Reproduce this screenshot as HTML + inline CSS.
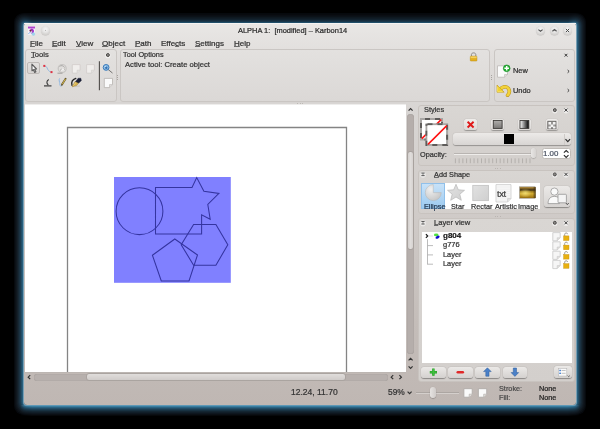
<!DOCTYPE html>
<html><head><meta charset="utf-8">
<style>
*{box-sizing:border-box;margin:0;padding:0}
html,body{width:600px;height:429px;overflow:hidden;background:#000}
body{position:relative;font-family:"Liberation Sans",sans-serif;font-size:8px;color:#2e2e2e}
.a{position:absolute}
svg.a{overflow:visible}
#win{left:24px;top:23px;width:552px;height:382px;border-radius:3px;
 background:linear-gradient(#e9e7e5 0px,#dfdcda 40px,#d9d6d4 80px,#cfcac7 200px,#c4bdb9 300px,#bfb7b3 382px);
}
.t{position:absolute;white-space:pre;line-height:1;-webkit-text-stroke:.22px currentColor;will-change:transform}
u{text-decoration:underline;text-decoration-thickness:1px;text-decoration-color:#6a6a6a;text-underline-offset:.4px}
</style></head><body>
<div class="a" style="left:24px;top:23px;width:552px;height:382px;border-radius:3px;box-shadow:0 0 0 1px rgb(118, 158, 180),0 0 0 2px rgb(40, 96, 126),0 0 0 3px rgb(34, 78, 104),0 0 0 4px rgb(30, 62, 82),0 0 0 5px rgb(27, 50, 66),0 0 0 6px rgb(23, 40, 52),0 0 0 7px rgb(20, 31, 40),0 0 0 8px rgb(16, 23, 30),0 0 0 9px rgb(12, 17, 22),0 0 0 10px rgb(6, 9, 13)"></div>
<div class="a" style="left:20px;top:405px;width:560px;height:11px;background:linear-gradient(rgb(95, 152, 182) 0px,rgb(95, 152, 182) 1px,rgb(55, 125, 160) 1px,rgb(55, 125, 160) 2px,rgb(42, 98, 130) 2px,rgb(42, 98, 130) 3px,rgb(34, 78, 104) 3px,rgb(34, 78, 104) 4px,rgb(28, 62, 84) 4px,rgb(28, 62, 84) 5px,rgb(24, 50, 66) 5px,rgb(24, 50, 66) 6px,rgb(20, 38, 50) 6px,rgb(20, 38, 50) 7px,rgb(17, 30, 40) 7px,rgb(17, 30, 40) 8px,rgb(14, 22, 30) 8px,rgb(14, 22, 30) 9px,rgb(11, 15, 20) 9px,rgb(11, 15, 20) 10px,rgb(6, 8, 10) 10px,rgb(6, 8, 10) 11px);-webkit-mask-image:linear-gradient(90deg,transparent 0,#000 12px,#000 548px,transparent 560px)"></div>
<div class="a" style="left:20px;top:14px;width:560px;height:9px;background:linear-gradient(rgb(8, 10, 14) 0px,rgb(8, 10, 14) 1px,rgb(10, 14, 20) 1px,rgb(10, 14, 20) 2px,rgb(12, 18, 24) 2px,rgb(12, 18, 24) 3px,rgb(14, 24, 32) 3px,rgb(14, 24, 32) 4px,rgb(16, 28, 38) 4px,rgb(16, 28, 38) 5px,rgb(18, 34, 46) 5px,rgb(18, 34, 46) 6px,rgb(22, 45, 62) 6px,rgb(22, 45, 62) 7px,rgb(25, 55, 75) 7px,rgb(25, 55, 75) 8px,rgb(32, 78, 105) 8px,rgb(32, 78, 105) 9px);-webkit-mask-image:linear-gradient(90deg,transparent 0,#000 12px,#000 548px,transparent 560px)"></div>
<div id="win" class="a"></div>
<div class="a" style="left:24px;top:23px;width:552px;height:1px;background:#f4f3f2"></div>
<svg class="a" style="left:27px;top:25.5px" width="9" height="10" viewBox="0 0 9 10">
<rect x="1" y="1" width="7" height="7.8" fill="#f6f2fa"/>
<rect x="1" y=".6" width="7" height="1.9" fill="#b040cc"/>
<path d="M4.6 2.6 C6.6 3 7.4 4.6 6.8 6.2 C6.2 7.6 4.6 7.8 3.8 7.4 C5 6.8 5.6 5.6 4.8 4.6 C4.4 4.1 3.8 4 3.2 4.2 Z" fill="#a030c8"/>
<ellipse cx="3.6" cy="4.6" rx="1.1" ry="1.2" fill="#702048"/>
<circle cx="6.4" cy="8" r="1.8" fill="#90d0e8" opacity=".85"/>
<path d="M1.4 7.6 C2.2 6.8 2.8 6.6 3.6 6.6" stroke="#6aa8e0" stroke-width=".9" fill="none"/>
</svg>
<div class="a" style="left:40.8px;top:25.5px;width:9px;height:9px;border-radius:50%;background:radial-gradient(circle at 50% 38%,#f6f6f6 0,#e6e5e4 40%,#d2d0ce 72%,#a8a6a4 100%);box-shadow:0 .6px .8px rgba(0,0,0,.18)"></div>
<svg class="a" style="left:40.8px;top:25.5px" width="9" height="9" viewBox="0 0 9 9"><circle cx="4.5" cy="4.3" r=".5" fill="#9a9896"/></svg>
<div class="a" style="left:535.8px;top:25.5px;width:9px;height:9px;border-radius:50%;background:radial-gradient(circle at 50% 38%,#f6f6f6 0,#e6e5e4 40%,#d2d0ce 72%,#a8a6a4 100%);box-shadow:0 .6px .8px rgba(0,0,0,.18)"></div>
<svg class="a" style="left:535.8px;top:25.5px" width="9" height="9" viewBox="0 0 9 9"><path d="M2.4 3.6 L4.5 5.3 L6.6 3.6" fill="none" stroke="#555" stroke-width="1.15"/></svg>
<div class="a" style="left:549.5px;top:25.5px;width:9px;height:9px;border-radius:50%;background:radial-gradient(circle at 50% 38%,#f6f6f6 0,#e6e5e4 40%,#d2d0ce 72%,#a8a6a4 100%);box-shadow:0 .6px .8px rgba(0,0,0,.18)"></div>
<svg class="a" style="left:549.5px;top:25.5px" width="9" height="9" viewBox="0 0 9 9"><path d="M2.4 5.2 L4.5 3.5 L6.6 5.2" fill="none" stroke="#555" stroke-width="1.15"/></svg>
<div class="a" style="left:563.2px;top:25.5px;width:9px;height:9px;border-radius:50%;background:radial-gradient(circle at 50% 38%,#f6f6f6 0,#e6e5e4 40%,#d2d0ce 72%,#a8a6a4 100%);box-shadow:0 .6px .8px rgba(0,0,0,.18)"></div>
<svg class="a" style="left:563.2px;top:25.5px" width="9" height="9" viewBox="0 0 9 9"><path d="M2.9 2.9 L6.1 6.1 M6.1 2.9 L2.9 6.1" fill="none" stroke="#4a4a4a" stroke-width="1"/></svg>
<div class="t" style="left:238px;top:26.89px;font-size:7.45px;color:#2a2a2a;font-weight:400;">ALPHA 1:&nbsp; [modified] – Karbon14</div>
<div class="t" style="left:30px;top:39.63px;font-size:8px;color:#2f2f2f;font-weight:400;"><u>F</u>ile</div>
<div class="t" style="left:51.5px;top:39.63px;font-size:8px;color:#2f2f2f;font-weight:400;"><u>E</u>dit</div>
<div class="t" style="left:76px;top:39.63px;font-size:8px;color:#2f2f2f;font-weight:400;"><u>V</u>iew</div>
<div class="t" style="left:102px;top:39.63px;font-size:8px;color:#2f2f2f;font-weight:400;"><u>O</u>bject</div>
<div class="t" style="left:134.5px;top:39.63px;font-size:8px;color:#2f2f2f;font-weight:400;"><u>P</u>ath</div>
<div class="t" style="left:160.5px;top:39.63px;font-size:8px;color:#2f2f2f;font-weight:400;">Effe<u>c</u>ts</div>
<div class="t" style="left:194.5px;top:39.63px;font-size:8px;color:#2f2f2f;font-weight:400;"><u>S</u>ettings</div>
<div class="t" style="left:233.5px;top:39.63px;font-size:8px;color:#2f2f2f;font-weight:400;"><u>H</u>elp</div>
<div class="a" style="left:25px;top:49px;width:91.5px;height:52.5px;border:1px solid #cac6c3;border-radius:3px;background:linear-gradient(#e3e1df,#dbd8d6)"></div>
<div class="a" style="left:119.5px;top:49px;width:370.5px;height:52.5px;border:1px solid #cac6c3;border-radius:3px;background:linear-gradient(#e3e1df,#dbd8d6)"></div>
<div class="a" style="left:493.5px;top:49px;width:81.5px;height:52.5px;border:1px solid #cac6c3;border-radius:3px;background:linear-gradient(#e3e1df,#dbd8d6)"></div>
<div class="t" style="left:30.7px;top:51.07px;font-size:7.6px;color:#333;font-weight:400;"><u>T</u>ools</div>
<svg class="a" style="left:0;top:0" width="600" height="429"><circle cx="107.9" cy="55.7" r="2.6" fill="rgba(255,255,255,.55)"/><circle cx="107.9" cy="55" r="1.5" fill="#8a8886" stroke="#4e4c4a" stroke-width="1"/></svg>
<div class="a" style="left:27.3px;top:62px;width:12.7px;height:12px;border:1px solid #bdb9b6;border-radius:2px;background:linear-gradient(#e2e0de,#d8d5d3)"></div>
<svg class="a" style="left:0;top:0" width="600" height="429">
<path d="M31.9 64.2 L32 70.8 L33.4 69.7 L34.7 72.4 L35.9 71.8 L34.6 69.2 L36.5 69 Z" fill="#fafafa" stroke="#5a5a5a" stroke-width="1.1" stroke-linejoin="round"/>
<path d="M45 66.2 C47.5 66.5 47 69 48.5 70.5 C49.5 71.6 50.5 72 51.5 72" fill="none" stroke="#8cb4e0" stroke-width=".9"/>
<rect x="43.3" y="64.9" width="2" height="2" fill="#e03040"/>
<rect x="50.5" y="71.1" width="2" height="2" fill="#e03040"/>
<g opacity=".55">
<circle cx="62.2" cy="68.5" r="4" fill="none" stroke="#b0aeac" stroke-width="1.2"/>
<path d="M59.5 66.5 C61 65 63.5 65.5 64.5 67.5 M60 70.5 C61.5 69 63 68 65 69.5" stroke="#7a7876" stroke-width="1" fill="none"/>
<path d="M57.5 73.2 L62.5 73.2" stroke="#6a6866" stroke-width="1"/>
<path d="M60.5 71 L63 67.5 L64.5 70 Z" fill="#fff"/>
</g>
<path d="M99.4 61.2 L99.4 90.2" stroke="#4e4c4a" stroke-width="1.1"/>
<path d="M108.3 69.6 L112.2 72.8" stroke="#747270" stroke-width="1" stroke-linecap="round"/>
<circle cx="106.1" cy="67.4" r="2.9" fill="#8cc0e8" stroke="#3a78b8" stroke-width="1"/>
<circle cx="106.3" cy="67.8" r="1.2" fill="#3a70b0"/>
<circle cx="105.2" cy="66.3" r=".6" fill="#e0f0fc"/>
<path d="M48.8 79.4 C46.5 80.5 46.2 83.5 48.3 85" fill="none" stroke="#3a3a3a" stroke-width="1.1"/>
<path d="M44 85.9 L51.5 85.9" stroke="#2a2a2a" stroke-width="1.1"/>
<path d="M59.6 78.4 C58.4 80.2 59.8 81.8 59.8 83.6 C59.8 85.4 60.2 86.6 61.6 86" fill="none" stroke="#88b4e2" stroke-width=".9"/>
<path d="M65.6 78.8 L62 84.6" stroke="#6a5a30" stroke-width="1.9" stroke-linecap="round"/>
<path d="M65.4 79 L62.2 84.3" stroke="#e8cc50" stroke-width=".8"/>
<path d="M62 84.6 L61.6 85.6" stroke="#333" stroke-width=".8"/>
<path d="M75.8 78.4 C72.8 79.4 71.2 82.2 72 85.3" fill="none" stroke="#262626" stroke-width="1.3" stroke-linecap="round"/>
<path d="M72.2 86.8 L75.2 81.4 L78.8 82.6 L76.6 85.6 Z" fill="#d8b450" stroke="#9a7a28" stroke-width=".5" stroke-linejoin="round"/>
<path d="M73.2 85.8 L76 82.4" stroke="#f0d890" stroke-width=".7"/>
<path d="M75.6 81.6 L78.2 78.2 L80.8 78.2 L81.4 80.6 L78.8 83 Z" fill="#1c2038" stroke="#10142a" stroke-width=".4" stroke-linejoin="round"/>
<path d="M74 86.5 L80 86" stroke="#b8b4b0" stroke-width=".8" opacity=".7"/>
</svg>
<svg class="a" style="left:0;top:0;opacity:1" width="600" height="429"><path d="M72.3 64.6 L80.1 64.6 L80.1 70.19999999999999 L77.1 73.19999999999999 L72.3 73.19999999999999 Z" fill="#f0eeec" stroke="#d0ccc9" stroke-width=".8"/><path d="M80.1 70.19999999999999 L77.1 70.19999999999999 L77.1 73.19999999999999" fill="#e0dedc" stroke="#d0ccc9" stroke-width=".6"/></svg>
<svg class="a" style="left:0;top:0;opacity:1" width="600" height="429"><path d="M86.6 64.6 L94.39999999999999 64.6 L94.39999999999999 70.19999999999999 L91.39999999999999 73.19999999999999 L86.6 73.19999999999999 Z" fill="#f0eeec" stroke="#d0ccc9" stroke-width=".8"/><path d="M94.39999999999999 70.19999999999999 L91.39999999999999 70.19999999999999 L91.39999999999999 73.19999999999999" fill="#e0dedc" stroke="#d0ccc9" stroke-width=".6"/></svg>
<svg class="a" style="left:0;top:0;opacity:1" width="600" height="429"><path d="M104.3 78.4 L112.5 78.4 L112.5 84.60000000000001 L109.5 87.60000000000001 L104.3 87.60000000000001 Z" fill="#fafafa" stroke="#b8b4b0" stroke-width=".8"/><path d="M112.5 84.60000000000001 L109.5 84.60000000000001 L109.5 87.60000000000001" fill="#e0dedc" stroke="#b8b4b0" stroke-width=".6"/></svg>
<div class="a" style="left:117.2px;top:74.5px;width:1px;height:1px;background:#a8a4a0"></div>
<div class="a" style="left:117.2px;top:76.5px;width:1px;height:1px;background:#a8a4a0"></div>
<div class="a" style="left:117.2px;top:78.5px;width:1px;height:1px;background:#a8a4a0"></div>
<div class="a" style="left:491px;top:74.5px;width:1px;height:1px;background:#a8a4a0"></div>
<div class="a" style="left:491px;top:76.5px;width:1px;height:1px;background:#a8a4a0"></div>
<div class="a" style="left:491px;top:78.5px;width:1px;height:1px;background:#a8a4a0"></div>
<div class="t" style="left:123px;top:51.22px;font-size:7.3px;color:#333;font-weight:400;">Tool Options</div>
<div class="t" style="left:125px;top:60.62px;font-size:7.65px;color:#333;font-weight:400;">Active tool: Create object</div>
<svg class="a" style="left:0;top:0" width="600" height="429">
<path d="M471.4 56.3 L471.4 54.6 C471.4 52.3 475.8 52.3 475.8 54.6 L475.8 56.3" fill="none" stroke="#8a8784" stroke-width="1"/>
<rect x="470.3" y="56.2" width="6.6" height="4.8" rx=".6" fill="#e4b020" stroke="#b88a10" stroke-width=".5"/>
<rect x="470.6" y="56.5" width="6" height="1.6" fill="#f4d060"/>
</svg>
<svg class="a" style="left:0;top:0" width="600" height="429">
<path d="M564.6 53.8 L567.4 56.6 M567.4 53.8 L564.6 56.6" stroke="#3a3a3a" stroke-width="1"/>
<path d="M497.5 65.8 L505 65.8 L507.5 68 L507.5 74.5 L504.5 77.2 L497.5 77.2 Z" fill="#fbfbfb" stroke="#b4b0ad" stroke-width=".7"/>
<path d="M507.5 74.5 L504.5 74.5 L504.5 77.2" fill="#dedcda" stroke="#b4b0ad" stroke-width=".5"/>
<circle cx="506.7" cy="68.3" r="3.4" fill="#22b030" stroke="#108020" stroke-width=".5"/>
<path d="M506.7 66 L506.7 70.6 M504.4 68.3 L509 68.3" stroke="#fff" stroke-width="1.5"/>
<path d="M567.6 70 L569.1 71.4 L567.6 72.8" fill="none" stroke="#3a3a3a" stroke-width="1"/>
<path d="M567.6 89.1 L569.1 90.5 L567.6 91.9" fill="none" stroke="#3a3a3a" stroke-width="1"/>
<path d="M500.2 89.6 C501.8 86.6 506.6 85.6 508.6 88.8 C509.9 91 509.2 93.6 507.6 95.2" stroke="#b89018" stroke-width="3.6" fill="none" stroke-linecap="round"/>
<path d="M500.2 89.6 C501.8 86.6 506.6 85.6 508.6 88.8 C509.9 91 509.2 93.6 507.6 95.2" stroke="#f2d23a" stroke-width="2.6" fill="none" stroke-linecap="round"/>
<path d="M497 85 L497 92.2 L504.2 92.2 Z" fill="#f0d030" stroke="#c09a18" stroke-width=".6" stroke-linejoin="round"/>
<path d="M497.6 86.6 L497.6 91.6 L502.6 91.6" fill="none" stroke="#f8e46a" stroke-width=".8"/>
</svg>
<div class="t" style="left:512.7px;top:67.04px;font-size:7.4px;color:#2e2e2e;font-weight:400;">New</div>
<div class="t" style="left:512.7px;top:86.54px;font-size:7.4px;color:#2e2e2e;font-weight:400;">Undo</div>
<div class="a" style="left:25px;top:101.5px;width:381px;height:3.5px;background:linear-gradient(#d6d3d1,#dcd9d7)"></div>
<div class="a" style="left:25px;top:104px;width:381px;height:1px;background:#eeedec"></div>
<div class="a" style="left:25px;top:105px;width:381px;height:267px;background:#fff"></div>
<svg class="a" style="left:0;top:0" width="600" height="429">
<path d="M67.5 372 L67.5 127.5 L346.5 127.5 L346.5 372" fill="none" stroke="#848484" stroke-width="1.3"/>
<rect x="114" y="177" width="116.8" height="105.8" fill="#8080ff"/>
<g fill="none" stroke="#3434a0" stroke-width="1.05" stroke-linejoin="miter">
<circle cx="139.5" cy="211.2" r="23.4"/>
<path d="M155.5 187.4 L192 187.4 L196.7 177.6 L203.9 191.3 L218.9 193.4 L207.8 204.5 L210.2 219.2 L201.6 214.8 L201.6 234 L155.5 234 Z"/>
<path d="M193.6 224.5 L215.9 224.5 L227.8 244.8 L215.9 265.2 L193.6 265.2 L181.2 244.8 Z"/>
<path d="M174.8 239 L197.5 255 L189 281 L161.3 281 L152.4 255.2 Z"/>
</g>
</svg>
<div class="a" style="left:406.6px;top:114.2px;width:7.8px;height:240.2px;border-radius:3.5px;background:#b5aeab;box-shadow:inset 0 0 1px rgba(0,0,0,.3)"></div>
<div class="a" style="left:407.2px;top:151.2px;width:6.6px;height:99.3px;border-radius:3px;background:linear-gradient(90deg,#d4d0ce,#e0dddb 50%,#d6d2d0);border:1px solid #a8a29e"></div>
<div class="a" style="left:25px;top:372px;width:381px;height:1px;background:#bcb6b2"></div>
<div class="a" style="left:34px;top:373.5px;width:353.5px;height:7.5px;border-radius:3px;background:#b7b0ad;box-shadow:inset 0 0 1px rgba(0,0,0,.25)"></div>
<div class="a" style="left:86.4px;top:373.3px;width:260.1px;height:7.7px;border-radius:3px;background:linear-gradient(#e0dddb,#d0ccca);border:1px solid #aaa4a0"></div>
<svg class="a" style="left:0;top:0" width="600" height="429">
<g fill="none" stroke="#333" stroke-width="1.2">
<path d="M408.6 110.6 L410.6 108.6 L412.6 110.6"/>
<path d="M408.6 360.3 L410.6 358.3 L412.6 360.3"/>
<path d="M408.6 366.3 L410.6 368.3 L412.6 366.3"/>
<path d="M30.2 375.2 L28.2 377.2 L30.2 379.2"/>
<path d="M393.2 375.2 L391.2 377.2 L393.2 379.2"/>
<path d="M399.4 375.2 L401.4 377.2 L399.4 379.2"/>
</g>
</svg>
<div class="a" style="left:418px;top:104.5px;width:157px;height:61.5px;border:1px solid #c8c3bf;border-radius:3px;background:linear-gradient(#d9d6d3,#d3cfcc)"></div>
<div class="a" style="left:418px;top:170px;width:157px;height:44px;border:1px solid #c8c3bf;border-radius:3px;background:linear-gradient(#d9d6d3,#d3cfcc)"></div>
<div class="a" style="left:418px;top:218px;width:157px;height:163.5px;border:1px solid #c8c3bf;border-radius:3px;background:linear-gradient(#d9d6d3,#d3cfcc)"></div>
<svg class="a" style="left:0;top:0" width="600" height="429"><circle cx="554.8" cy="110.8" r="2.6" fill="rgba(255,255,255,.55)"/><circle cx="566" cy="110.8" r="2.6" fill="rgba(255,255,255,.55)"/><circle cx="554.8" cy="110.1" r="1.5" fill="#8a8886" stroke="#4e4c4a" stroke-width="1"/><path d="M564.5 108.6 L567.5 111.6 M567.5 108.6 L564.5 111.6" stroke="#3a3a3a" stroke-width="1"/></svg>
<svg class="a" style="left:0;top:0" width="600" height="429"><circle cx="554.8" cy="175.1" r="2.6" fill="rgba(255,255,255,.55)"/><circle cx="566" cy="175.1" r="2.6" fill="rgba(255,255,255,.55)"/><circle cx="554.8" cy="174.4" r="1.5" fill="#8a8886" stroke="#4e4c4a" stroke-width="1"/><path d="M564.5 172.9 L567.5 175.9 M567.5 172.9 L564.5 175.9" stroke="#3a3a3a" stroke-width="1"/></svg>
<svg class="a" style="left:0;top:0" width="600" height="429"><circle cx="554.8" cy="223.5" r="2.6" fill="rgba(255,255,255,.55)"/><circle cx="566" cy="223.5" r="2.6" fill="rgba(255,255,255,.55)"/><circle cx="554.8" cy="222.8" r="1.5" fill="#8a8886" stroke="#4e4c4a" stroke-width="1"/><path d="M564.5 221.3 L567.5 224.3 M567.5 221.3 L564.5 224.3" stroke="#3a3a3a" stroke-width="1"/></svg>
<svg class="a" style="left:0;top:0" width="600" height="429"><circle cx="423" cy="175.0" r="2.8" fill="rgba(255,255,255,.5)"/><path d="M421.4 173.1 L424.6 173.1 M421.4 175.6 L424.6 175.6" stroke="#555" stroke-width="1"/><path d="M422.2 173.8 L423.8 173.8 M422.2 174.9 L423.8 174.9" stroke="#777" stroke-width=".6"/></svg>
<svg class="a" style="left:0;top:0" width="600" height="429"><circle cx="423" cy="223.4" r="2.8" fill="rgba(255,255,255,.5)"/><path d="M421.4 221.5 L424.6 221.5 M421.4 224.0 L424.6 224.0" stroke="#555" stroke-width="1"/><path d="M422.2 222.20000000000002 L423.8 222.20000000000002 M422.2 223.3 L423.8 223.3" stroke="#777" stroke-width=".6"/></svg>
<div class="t" style="left:423.5px;top:106.34px;font-size:7.4px;color:#333;font-weight:400;">St<u>y</u>les</div>
<div class="t" style="left:433.8px;top:170.92px;font-size:7.3px;color:#333;font-weight:400;"><u>A</u>dd Shape</div>
<div class="t" style="left:433.8px;top:219.07px;font-size:7.6px;color:#333;font-weight:400;"><u>L</u>ayer view</div>
<svg class="a" style="left:0;top:0" width="600" height="429">
<rect x="421" y="119" width="21" height="20.5" fill="#fff" stroke="#a8a6a4" stroke-width="2"/>
<rect x="421" y="119" width="21" height="20.5" fill="none" stroke="#5e5c5a" stroke-width="2" stroke-dasharray="5 5" stroke-dashoffset="-4"/>
<path d="M421.8 138.6 L441.2 119.6" stroke="#ff1010" stroke-width="1.5"/>
<rect x="426.5" y="124.3" width="20.6" height="20.6" fill="#fff" stroke="#a8a6a4" stroke-width="2"/>
<rect x="426.5" y="124.3" width="20.6" height="20.6" fill="none" stroke="#5e5c5a" stroke-width="2" stroke-dasharray="5 5" stroke-dashoffset="-1"/>
<rect x="427.6" y="125.4" width="18.4" height="18.4" fill="#fff"/>
<path d="M428 144.4 L446.8 125.6" stroke="#ff1010" stroke-width="1.5"/>
</svg>
<div class="a" style="left:464.2px;top:119.2px;width:12.8px;height:11px;border-radius:2.5px;background:linear-gradient(#efedeb,#dcd9d7);box-shadow:0 .5px 1px rgba(0,0,0,.3)"></div>
<div class="a" style="left:490.6px;top:119.2px;width:13.2px;height:11px;border-radius:2.5px;background:linear-gradient(#efedeb,#dcd9d7);box-shadow:0 .5px 1px rgba(0,0,0,.3)"></div>
<div class="a" style="left:517.7px;top:119.2px;width:13.2px;height:11px;border-radius:2.5px;background:linear-gradient(#efedeb,#dcd9d7);box-shadow:0 .5px 1px rgba(0,0,0,.3)"></div>
<div class="a" style="left:545.6px;top:119.2px;width:12.6px;height:11px;border-radius:2.5px;background:linear-gradient(#efedeb,#dcd9d7);box-shadow:0 .5px 1px rgba(0,0,0,.3)"></div>
<svg class="a" style="left:0;top:0" width="600" height="429">
<path d="M467.6 121.7 L473.6 127.5 M473.6 121.7 L467.6 127.5" stroke="#e01818" stroke-width="1.9"/>
<defs><linearGradient id="gg" x1="0" y1="0" x2="1" y2="0"><stop offset="0" stop-color="#fff"/><stop offset="1" stop-color="#000"/></linearGradient>
<linearGradient id="gs" x1="0" y1="0" x2="0" y2="1"><stop offset="0" stop-color="#b0aeac"/><stop offset="1" stop-color="#7a7876"/></linearGradient></defs>
<rect x="493.3" y="120.4" width="8.8" height="8" fill="url(#gs)" stroke="#3a3836" stroke-width=".9"/>
<rect x="520" y="120.4" width="8.8" height="8" fill="url(#gg)" stroke="#3a3836" stroke-width=".9"/>
<rect x="547.8" y="121.2" width="8.2" height="7.6" fill="#9a9896" stroke="#5a5856" stroke-width=".7"/>
<path d="M548.5 122 h2.5 v2.5 h-2.5z M553 122 h2.5 v2.5 h-2.5z M550.7 124.5 h2.5 v2.5 h-2.5z M548.5 126.5 h2.5 v2 h-2.5z M553 126.5 h2.5 v2 h-2.5z" fill="#f4f4f4"/>
</svg>
<div class="a" style="left:452.5px;top:133.2px;width:118.5px;height:12px;border-radius:3px;background:linear-gradient(#eceae8,#d8d5d3);box-shadow:0 .5px 1px rgba(0,0,0,.3)"></div>
<div class="a" style="left:563.5px;top:134px;width:1px;height:10.5px;background:#cfcbc8"></div>
<div class="a" style="left:503.8px;top:134.4px;width:10.2px;height:9.8px;background:#000"></div>
<svg class="a" style="left:0;top:0" width="600" height="429"><path d="M565.5 139.1 L567.8 141.6 L570.1 139.1" fill="none" stroke="#2a2a2a" stroke-width="1.15"/></svg>
<div class="t" style="left:419.9px;top:151.02px;font-size:7.3px;color:#333;font-weight:400;">Opacity:</div>
<div class="a" style="left:454px;top:152.7px;width:77px;height:1px;background:#b8b4b1;box-shadow:0 1px 0 #eeecea"></div>
<svg class="a" style="left:0;top:0" width="600" height="429"><g stroke="#aca8a4" stroke-width=".8"><path d="M455.40 158.4 L455.40 163.2"/><path d="M459.13 158.4 L459.13 163.2"/><path d="M462.86 158.4 L462.86 163.2"/><path d="M466.59 158.4 L466.59 163.2"/><path d="M470.32 158.4 L470.32 163.2"/><path d="M474.05 158.4 L474.05 163.2"/><path d="M477.78 158.4 L477.78 163.2"/><path d="M481.51 158.4 L481.51 163.2"/><path d="M485.24 158.4 L485.24 163.2"/><path d="M488.97 158.4 L488.97 163.2"/><path d="M492.70 158.4 L492.70 163.2"/><path d="M496.43 158.4 L496.43 163.2"/><path d="M500.16 158.4 L500.16 163.2"/><path d="M503.89 158.4 L503.89 163.2"/><path d="M507.62 158.4 L507.62 163.2"/><path d="M511.35 158.4 L511.35 163.2"/><path d="M515.08 158.4 L515.08 163.2"/><path d="M518.81 158.4 L518.81 163.2"/><path d="M522.54 158.4 L522.54 163.2"/><path d="M526.27 158.4 L526.27 163.2"/><path d="M530.00 158.4 L530.00 163.2"/></g></svg>
<div class="a" style="left:530.8px;top:148.4px;width:5px;height:10px;border-radius:2.5px;background:linear-gradient(90deg,#e8e6e4,#d6d3d1);box-shadow:0 .5px 1px rgba(0,0,0,.35)"></div>
<div class="a" style="left:541.6px;top:148.3px;width:29.4px;height:10.8px;border-radius:2.5px;background:#fff;border:1px solid #bfbbb7"></div>
<div class="t" style="left:542.7px;top:149.81px;font-size:7.9px;color:#4a5262;font-weight:400;">1.00</div>
<svg class="a" style="left:0;top:0" width="600" height="429"><g fill="none" stroke="#2a2a2a" stroke-width="1.15"><path d="M563.9 152.7 L566.2 150.5 L568.5 152.7"/><path d="M563.9 155.2 L566.2 157.4 L568.5 155.2"/></g></svg>
<div class="a" style="left:421.4px;top:182.8px;width:118.4px;height:26.5px;background:#fff"></div>
<div class="a" style="left:421.4px;top:182.8px;width:23.8px;height:26.5px;background:linear-gradient(#c8e2f8,#9ccaf0);border:1px solid #90c0ea"></div>
<svg class="a" style="left:0;top:0" width="600" height="429">
<defs><radialGradient id="pie" cx=".35" cy=".3" r=".8"><stop offset="0" stop-color="#f0f0f0"/><stop offset="1" stop-color="#c4c4c4"/></radialGradient>
<linearGradient id="shp" x1="0" y1="0" x2="1" y2="1"><stop offset="0" stop-color="#e2e2e2"/><stop offset="1" stop-color="#cfcfcf"/></linearGradient>
<linearGradient id="img" x1="0" y1="0" x2="0" y2="1"><stop offset="0" stop-color="#c8a050"/><stop offset=".12" stop-color="#8a6a28"/><stop offset=".28" stop-color="#3a2c12"/><stop offset=".4" stop-color="#9a7a20"/><stop offset=".6" stop-color="#d4ac30"/><stop offset="1" stop-color="#9a7010"/></linearGradient><radialGradient id="imgh" cx=".35" cy=".55" r=".4"><stop offset="0" stop-color="#f8e880" stop-opacity=".8"/><stop offset="1" stop-color="#f8e880" stop-opacity="0"/></radialGradient></defs>
<path d="M433.3 192.6 L433.3 184.6 A8 8 0 1 0 441.3 192.6 Z" fill="url(#pie)" stroke="#b4b4b4" stroke-width=".5"/>
<path d="M456 184.3 L458.3 189.8 L464.5 190.3 L459.8 194.2 L461.3 200.3 L456 197 L450.7 200.3 L452.2 194.2 L447.5 190.3 L453.7 189.8 Z" fill="url(#shp)" stroke="#b8b8b8" stroke-width=".7"/>
<rect x="472.8" y="185.3" width="15.8" height="15.4" fill="url(#shp)" stroke="#bcbcbc" stroke-width=".7"/>
<path d="M496 184.6 L511 184.6 L511 198.6 L507.6 202 L496 202 Z" fill="#f8f8f8" stroke="#c4c4c4" stroke-width=".7"/>
<path d="M496.6 187 h14 M496.6 189.2 h14 M496.6 191.4 h14 M496.6 193.6 h14 M496.6 195.8 h14 M496.6 198 h14 M496.6 200.2 h11" stroke="#e6e6e6" stroke-width=".5"/>
<path d="M511 198.6 L507.6 198.6 L507.6 202" fill="#e4e4e4" stroke="#c4c4c4" stroke-width=".6"/>
<rect x="519.8" y="186.9" width="15.8" height="11.2" fill="url(#img)" stroke="#2a2010" stroke-width=".3"/><rect x="519.8" y="186.9" width="15.8" height="11.2" fill="url(#imgh)"/><rect x="533.6" y="187" width="2" height="11" fill="#3a2a10" opacity=".5"/>
</svg>
<div class="t" style="left:497.4px;top:188.64px;font-size:9.4px;color:#3e3e3e;font-weight:400;letter-spacing:-.4px">txt</div>
<div class="t" style="left:423.6px;top:202.92px;font-size:7.3px;color:#243850;font-weight:400;">Ellipse</div>
<div class="t" style="left:450.6px;top:202.92px;font-size:7.3px;color:#333;font-weight:400;">Star</div>
<div class="t" style="left:470.8px;top:202.92px;font-size:7.3px;color:#333;font-weight:400;">Rectar</div>
<div class="t" style="left:494.9px;top:202.92px;font-size:7.3px;color:#333;font-weight:400;">Artistic</div>
<div class="t" style="left:518px;top:202.92px;font-size:7.3px;color:#333;font-weight:400;">Image</div>
<div class="a" style="left:543.5px;top:186px;width:26.4px;height:20.5px;border-radius:3px;background:linear-gradient(#ebe9e7,#d6d3d1);box-shadow:0 .5px 1px rgba(0,0,0,.35)"></div>
<svg class="a" style="left:0;top:0" width="600" height="429">
<circle cx="554.4" cy="191.6" r="3.6" fill="#fafafa" stroke="#8e8e8e" stroke-width=".7"/>
<path d="M548 203.6 C548.2 198.6 550.6 196.4 554.4 196.4 C557 196.4 558.6 197.4 559.4 199 L559.4 203.6 Z" fill="#fafafa" stroke="#8e8e8e" stroke-width=".7"/>
<rect x="558" y="194.3" width="8.4" height="8.5" rx=".8" fill="#f4f4f4" stroke="#8a8a8a" stroke-width=".7"/>
<path d="M566 203.2 L567.3 204.5 L568.6 203.2" fill="none" stroke="#222" stroke-width=".9"/>
</svg>
<div class="a" style="left:421.6px;top:231.8px;width:150px;height:131.2px;background:#fff"></div>
<svg class="a" style="left:0;top:0" width="600" height="429">
<path d="M425.9 234.2 L427.7 236 L425.9 237.8" fill="none" stroke="#1a1a1a" stroke-width="1.2"/>
<path d="M429.5 236 L433 236" stroke="#aaa" stroke-width=".7" stroke-dasharray="1 1"/>
<path d="M427.5 239.2 L427.5 264.5" stroke="#aaa" stroke-width=".8"/>
<path d="M427.5 245.6 L433 245.6 M427.5 254.9 L433 254.9 M427.5 264.2 L433 264.2" stroke="#aaa" stroke-width=".8"/>
<ellipse cx="436.2" cy="234.9" rx="2.3" ry="1.4" fill="#50e040"/>
<ellipse cx="437.6" cy="237.2" rx="2.2" ry="1.3" fill="#1010d0" transform="rotate(-25 437.6 237.2)"/>
</svg>
<div class="t" style="left:443.3px;top:231.63px;font-size:8px;color:#1a1a1a;font-weight:700;">g804</div>
<div class="t" style="left:443.3px;top:240.95px;font-size:7.5px;color:#333;font-weight:400;">g776</div>
<div class="t" style="left:443.3px;top:250.54px;font-size:7.4px;color:#333;font-weight:400;">Layer</div>
<div class="t" style="left:443.3px;top:259.84px;font-size:7.4px;color:#333;font-weight:400;">Layer</div>
<svg class="a" style="left:0;top:0;opacity:1" width="600" height="429"><path d="M552.8 232.6 L560.1999999999999 232.6 L560.1999999999999 237.79999999999998 L557.1999999999999 240.79999999999998 L552.8 240.79999999999998 Z" fill="#f6f6f6" stroke="#c8c8c8" stroke-width=".8"/><path d="M560.1999999999999 237.79999999999998 L557.1999999999999 237.79999999999998 L557.1999999999999 240.79999999999998" fill="#e0dedc" stroke="#c8c8c8" stroke-width=".6"/></svg>
<svg class="a" style="left:0;top:0" width="600" height="429"><path d="M564.7 236.0 L564.7 234.2 C564.7 232.5 567.6 232.5 567.6 234.2" fill="none" stroke="#8a8886" stroke-width=".8"/><rect x="563.6" y="235.9" width="5.4" height="4.6" fill="#e8b010" stroke="#c09010" stroke-width=".4"/></svg>
<svg class="a" style="left:0;top:0;opacity:1" width="600" height="429"><path d="M552.8 241.8 L560.1999999999999 241.8 L560.1999999999999 247.0 L557.1999999999999 250.0 L552.8 250.0 Z" fill="#f6f6f6" stroke="#c8c8c8" stroke-width=".8"/><path d="M560.1999999999999 247.0 L557.1999999999999 247.0 L557.1999999999999 250.0" fill="#e0dedc" stroke="#c8c8c8" stroke-width=".6"/></svg>
<svg class="a" style="left:0;top:0" width="600" height="429"><path d="M564.7 245.20000000000002 L564.7 243.4 C564.7 241.70000000000002 567.6 241.70000000000002 567.6 243.4" fill="none" stroke="#8a8886" stroke-width=".8"/><rect x="563.6" y="245.10000000000002" width="5.4" height="4.6" fill="#e8b010" stroke="#c09010" stroke-width=".4"/></svg>
<svg class="a" style="left:0;top:0;opacity:1" width="600" height="429"><path d="M552.8 251.2 L560.1999999999999 251.2 L560.1999999999999 256.4 L557.1999999999999 259.4 L552.8 259.4 Z" fill="#f6f6f6" stroke="#c8c8c8" stroke-width=".8"/><path d="M560.1999999999999 256.4 L557.1999999999999 256.4 L557.1999999999999 259.4" fill="#e0dedc" stroke="#c8c8c8" stroke-width=".6"/></svg>
<svg class="a" style="left:0;top:0" width="600" height="429"><path d="M564.7 254.6 L564.7 252.79999999999998 C564.7 251.1 567.6 251.1 567.6 252.79999999999998" fill="none" stroke="#8a8886" stroke-width=".8"/><rect x="563.6" y="254.5" width="5.4" height="4.6" fill="#e8b010" stroke="#c09010" stroke-width=".4"/></svg>
<svg class="a" style="left:0;top:0;opacity:1" width="600" height="429"><path d="M552.8 260.4 L560.1999999999999 260.4 L560.1999999999999 265.59999999999997 L557.1999999999999 268.59999999999997 L552.8 268.59999999999997 Z" fill="#f6f6f6" stroke="#c8c8c8" stroke-width=".8"/><path d="M560.1999999999999 265.59999999999997 L557.1999999999999 265.59999999999997 L557.1999999999999 268.59999999999997" fill="#e0dedc" stroke="#c8c8c8" stroke-width=".6"/></svg>
<svg class="a" style="left:0;top:0" width="600" height="429"><path d="M564.7 263.79999999999995 L564.7 262.0 C564.7 260.29999999999995 567.6 260.29999999999995 567.6 262.0" fill="none" stroke="#8a8886" stroke-width=".8"/><rect x="563.6" y="263.7" width="5.4" height="4.6" fill="#e8b010" stroke="#c09010" stroke-width=".4"/></svg>
<div class="a" style="left:421px;top:366.5px;width:24.8px;height:11.2px;border-radius:3px;background:linear-gradient(#ebe9e7,#d4d1cf);box-shadow:0 .5px 1px rgba(0,0,0,.35)"></div>
<svg class="a" style="left:0;top:0" width="600" height="429"><path d="M433.4 368.6 L433.4 375.8 M429.8 372.2 L437 372.2" stroke="#20a020" stroke-width="2.4"/><path d="M433.4 368.9 L433.4 375.5 M430.1 372.2 L436.7 372.2" stroke="#40c040" stroke-width="1.2"/></svg>
<div class="a" style="left:448px;top:366.5px;width:24.8px;height:11.2px;border-radius:3px;background:linear-gradient(#ebe9e7,#d4d1cf);box-shadow:0 .5px 1px rgba(0,0,0,.35)"></div>
<svg class="a" style="left:0;top:0" width="600" height="429"><rect x="456.5" y="371" width="7.6" height="2.6" rx="1.3" fill="#e02828"/></svg>
<div class="a" style="left:475px;top:366.5px;width:24.8px;height:11.2px;border-radius:3px;background:linear-gradient(#ebe9e7,#d4d1cf);box-shadow:0 .5px 1px rgba(0,0,0,.35)"></div>
<svg class="a" style="left:0;top:0" width="600" height="429"><path d="M487.4 367.8 L491.2 371.6 L489 371.6 L489 376.2 L485.8 376.2 L485.8 371.6 L483.6 371.6 Z" fill="#4a80c8" stroke="#2a5a9a" stroke-width=".5"/></svg>
<div class="a" style="left:502.5px;top:366.5px;width:24.8px;height:11.2px;border-radius:3px;background:linear-gradient(#ebe9e7,#d4d1cf);box-shadow:0 .5px 1px rgba(0,0,0,.35)"></div>
<svg class="a" style="left:0;top:0" width="600" height="429"><path d="M514.9 376.4 L518.7 372.6 L516.5 372.6 L516.5 368 L513.3 368 L513.3 372.6 L511.1 372.6 Z" fill="#4a80c8" stroke="#2a5a9a" stroke-width=".5"/></svg>
<div class="a" style="left:553.9px;top:366px;width:17.9px;height:12.4px;border-radius:3px;background:linear-gradient(#ebe9e7,#d4d1cf);box-shadow:0 .5px 1px rgba(0,0,0,.35)"></div>
<svg class="a" style="left:0;top:0" width="600" height="429">
<rect x="558.6" y="368.4" width="8.2" height="7.6" fill="#fafafa" stroke="#b0b0b0" stroke-width=".5"/>
<rect x="559.3" y="369.8" width="1.6" height="1.4" fill="#3a7ad0"/><rect x="559.3" y="372.6" width="1.6" height="1.4" fill="#3a7ad0"/>
<path d="M561.6 370.5 h4 M561.6 373.3 h4" stroke="#9a9a9a" stroke-width=".6"/>
<path d="M567.6 375.6 L568.7 376.7 L569.8 375.6" fill="none" stroke="#333" stroke-width=".7"/>
</svg>
<div class="t" style="left:290.5px;top:388.40px;font-size:8.5px;color:#333;font-weight:400;">12.24, 11.70</div>
<div class="t" style="left:388.3px;top:388.49px;font-size:8.4px;color:#333;font-weight:400;">59%</div>
<svg class="a" style="left:0;top:0" width="600" height="429">
<path d="M407.6 391.6 L409.6 393.6 L411.6 391.6" fill="none" stroke="#333" stroke-width="1.2"/>
</svg>
<div class="a" style="left:416px;top:391.6px;width:43px;height:1px;background:#aca6a2;box-shadow:0 1px 0 #d4cfcc"></div>
<div class="a" style="left:430.2px;top:386.6px;width:6px;height:11px;border-radius:3px;background:linear-gradient(90deg,#e6e3e1,#d0ccca);box-shadow:0 .5px 1px rgba(0,0,0,.4)"></div>
<svg class="a" style="left:0;top:0;opacity:1" width="600" height="429"><path d="M463.9 388.7 L472.2 388.7 L472.2 394.2 L469.2 397.2 L463.9 397.2 Z" fill="#fafafa" stroke="#aca8a4" stroke-width=".8"/><path d="M472.2 394.2 L469.2 394.2 L469.2 397.2" fill="#e0dedc" stroke="#aca8a4" stroke-width=".6"/></svg>
<svg class="a" style="left:0;top:0;opacity:1" width="600" height="429"><path d="M478.4 388.7 L486.7 388.7 L486.7 394.2 L483.7 397.2 L478.4 397.2 Z" fill="#fafafa" stroke="#aca8a4" stroke-width=".8"/><path d="M486.7 394.2 L483.7 394.2 L483.7 397.2" fill="#e0dedc" stroke="#aca8a4" stroke-width=".6"/></svg>
<div class="t" style="left:498.9px;top:385.22px;font-size:7.3px;color:#4a4a4a;font-weight:400;">Stroke:</div>
<div class="t" style="left:498.9px;top:393.62px;font-size:7.3px;color:#4a4a4a;font-weight:400;">Fill:</div>
<div class="t" style="left:538.9px;top:385.36px;font-size:7.25px;color:#1e1e1e;font-weight:400;">None</div>
<div class="t" style="left:538.9px;top:393.76px;font-size:7.25px;color:#1e1e1e;font-weight:400;">None</div>
<div class="a" style="left:297px;top:103px;width:1px;height:1px;background:#bdb9b5"></div>
<div class="a" style="left:299.5px;top:103px;width:1px;height:1px;background:#bdb9b5"></div>
<div class="a" style="left:302px;top:103px;width:1px;height:1px;background:#bdb9b5"></div>
<div class="a" style="left:494.5px;top:167.5px;width:1px;height:1px;background:#bab5b1"></div>
<div class="a" style="left:497px;top:167.5px;width:1px;height:1px;background:#bab5b1"></div>
<div class="a" style="left:499.5px;top:167.5px;width:1px;height:1px;background:#bab5b1"></div>
<div class="a" style="left:494.5px;top:215.5px;width:1px;height:1px;background:#bab5b1"></div>
<div class="a" style="left:497px;top:215.5px;width:1px;height:1px;background:#bab5b1"></div>
<div class="a" style="left:499.5px;top:215.5px;width:1px;height:1px;background:#bab5b1"></div>
</body></html>
